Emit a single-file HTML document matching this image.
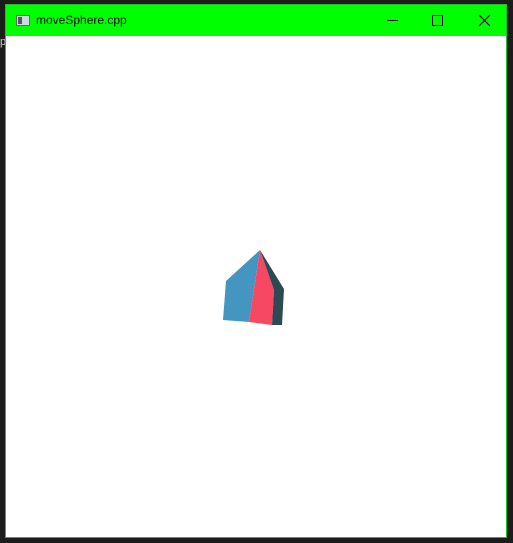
<!DOCTYPE html>
<html><head><meta charset="utf-8"><style>
html,body{margin:0;padding:0;width:513px;height:543px;overflow:hidden;background:#1c1c1c;font-family:"Liberation Sans",sans-serif;}
#win{position:absolute;left:5px;top:4px;width:500px;height:532px;border:1px solid #22c022;background:#fff;}
#tb{position:absolute;left:0;top:0;width:500px;height:31px;background:#00ff00;}
#tb .t{position:absolute;left:30px;top:8px;font-size:12px;color:#000;}
#ic{position:absolute;left:10px;top:10px;width:12px;height:9px;border:1px solid #666;background:#cfd8e0;}
#ic:before{content:"";position:absolute;left:1px;top:1px;width:4px;height:7px;background:#556;}
</style></head><body>
<div style="position:absolute;left:0;top:36px;font-size:11px;color:#ccc">p</div>
<div id="win">
<div id="tb"><div id="ic"></div><div class="t">moveSphere.cpp</div>
<svg width="500" height="31" style="position:absolute;left:0;top:0" fill="none" stroke="#000" stroke-width="1">
<line x1="381" y1="15.5" x2="392" y2="15.5"/>
<rect x="426.5" y="10.5" width="10" height="10"/>
<line x1="473" y1="10" x2="484" y2="21"/><line x1="484" y1="10" x2="473" y2="21"/>
</svg></div>
</div>
<svg width="513" height="543" style="position:absolute;left:0;top:0">
<polygon points="260,250 226,281 223,320 249,322" fill="#4595c1"/>
<polygon points="260,250 249,322 272,325 274,290" fill="#f64862"/>
<polygon points="260,250 274,290 272,325 282,325 284,289" fill="#2b4a53"/>
</svg>
</body></html>
